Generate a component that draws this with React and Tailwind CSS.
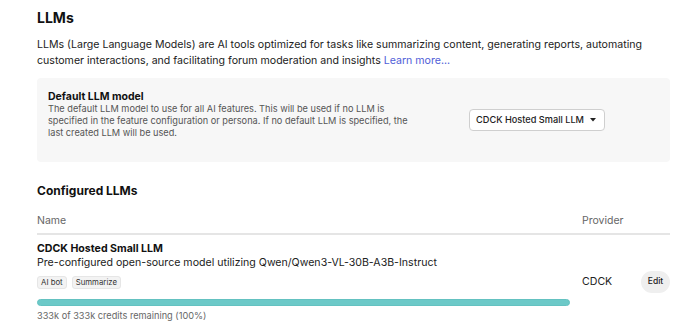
export default function App() {
  return (
    <div
      className="min-h-screen bg-white text-[#222] pl-[37px] pr-[20px] pt-[9px]"
      style={{ fontFamily: "Inter, 'Noto Sans', sans-serif" }}
    >
      {/* Header */}
      <h1 className="text-[14px] font-bold leading-[18px] text-[#111] mb-[10px]">LLMs</h1>
      <p className="text-[10.6px] leading-[16px] text-[#222]">
        LLMs (Large Language Models) are AI tools optimized for tasks like summarizing content, generating reports, automating
        customer interactions, and facilitating forum moderation and insights{" "}
        <a href="#" className="text-[#5060d8]">Learn more...</a>
      </p>

      {/* Default model box */}
      <div className="mt-[9px] h-[84px] rounded-[4px] bg-[#f7f7f7] pl-[11px] pr-[65px] pt-[12px] flex justify-between items-start">
        <div className="w-[372px]">
          <div className="text-[10.5px] font-bold leading-[13px] text-[#111]">Default LLM model</div>
          <p className="text-[9.2px] leading-[12px] text-[#555]">
            The default LLM model to use for all AI features. This will be used if no LLM is specified in the feature
            configuration or persona. If no default LLM is specified, the last created LLM will be used.
          </p>
        </div>
        <button className="mt-[19px] h-[22px] pl-[6px] pr-[8px] flex items-center gap-[6px] rounded-[4px] border border-[#cfcfcf] bg-white text-[9.2px] font-medium text-[#222]">
          CDCK Hosted Small LLM
          <svg width="6" height="4" viewBox="0 0 6 4">
            <path d="M0 0 L6 0 L3 3.5 Z" fill="#222" />
          </svg>
        </button>
      </div>

      {/* Configured LLMs */}
      <h2 className="mt-[21px] text-[12px] font-bold leading-[16px] text-[#111]">Configured LLMs</h2>
      <div className="mt-[15px] flex text-[10.5px] leading-[14px] text-[#666] border-b-2 border-[#e5e5e5] pb-[5px]">
        <div className="flex-1">Name</div>
        <div className="w-[88px]">Provider</div>
      </div>

      <div className="flex items-center pt-[6px]">
        <div className="flex-1 pr-[12px]">
          <div className="text-[10.6px] font-bold leading-[15px] text-[#111]">CDCK Hosted Small LLM</div>
          <div className="text-[10.6px] leading-[14px] text-[#222]">
            Pre-configured open-source model utilizing Qwen/Qwen3-VL-30B-A3B-Instruct
          </div>
          <div className="mt-[6px] flex gap-[5px]">
            <span className="px-[3px] h-[13px] leading-[11px] rounded-[3px] bg-[#f3f3f3] border border-[#e6e6e6] text-[7.8px] text-[#333]">
              AI bot
            </span>
            <span className="px-[3px] h-[13px] leading-[11px] rounded-[3px] bg-[#f3f3f3] border border-[#e6e6e6] text-[7.8px] text-[#333]">
              Summarize
            </span>
          </div>
          <div className="mt-[10px] h-[7px] w-full rounded-full bg-[#6cc9c8] border border-[#64c2c1]"></div>
          <div className="mt-[4px] text-[9.2px] leading-[12px] text-[#666]">333k of 333k credits remaining (100%)</div>
        </div>
        <div className="w-[59px] text-[10.6px] text-[#222]">CDCK</div>
        <button className="w-[29px] h-[22px] rounded-full bg-[#efefef] text-[8.5px] font-medium text-[#222]">Edit</button>
      </div>
    </div>
  );
}
